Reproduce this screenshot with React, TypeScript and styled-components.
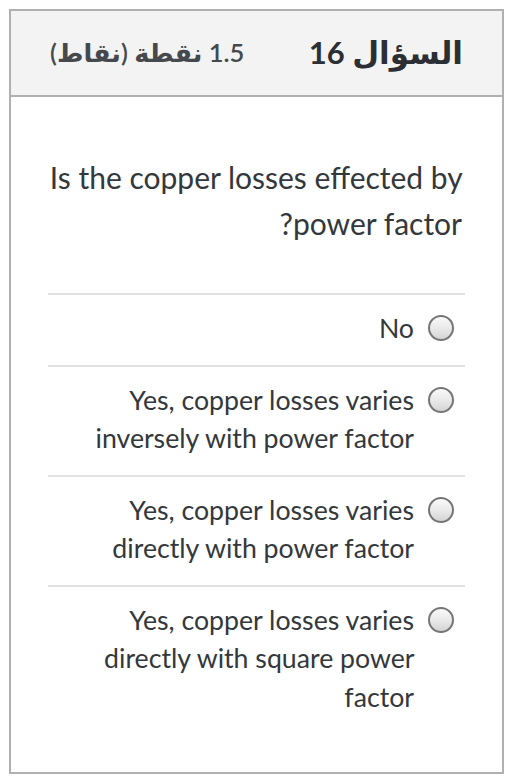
import styled, { createGlobalStyle } from "styled-components";

const GlobalStyle = createGlobalStyle`
  html, body {
    margin: 0;
    padding: 0;
    background: #ffffff;
  }
  body {
    font-family: Lato, "DejaVu Sans", sans-serif;
    color: #333a3f;
  }
`;

const Page = styled.div`
  padding: 9px;
  width: 531px;
  box-sizing: border-box;
`;

const Card = styled.section`
  direction: rtl;
  width: 495px;
  height: 765px;
  box-sizing: border-box;
  border: 2px solid #b0b0b0;
  background: #ffffff;
  display: flex;
  flex-direction: column;
`;

const Header = styled.header`
  height: 86px;
  flex-shrink: 0;
  box-sizing: border-box;
  background: #f3f3f3;
  border-bottom: 2px solid #b0b0b0;
  display: flex;
  align-items: center;
  justify-content: space-between;
  padding: 0 39px 2px 39px;
`;

const Title = styled.h2`
  margin: 0;
  font-size: 31px;
  font-weight: 700;
  color: #2b2f33;
`;

const Points = styled.span`
  font-size: 25.5px;
  font-weight: 600;
  color: #45494d;
`;

const Body = styled.div`
  padding: 57px 37px 0 37px;
`;

const Question = styled.p`
  margin: 0 0 47px 0;
  padding-right: 3px;
  font-size: 30px;
  line-height: 46px;
  color: #33383c;
`;

const Answers = styled.ul`
  list-style: none;
  margin: 0;
  padding: 0;
`;

const Answer = styled.li`
  border-top: 2px solid #e1e1e1;
  padding: 14px 11px 17px 0;
  display: flex;
  align-items: flex-start;
  gap: 14px;
`;

const Radio = styled.span`
  width: 26px;
  height: 26px;
  flex-shrink: 0;
  box-sizing: border-box;
  margin-top: 6px;
  border-radius: 50%;
  border: 2px solid #767676;
  background: linear-gradient(180deg, #fafafa 0%, #e6e6e6 60%, #d4d4d4 100%);
`;

const Label = styled.span`
  font-size: 26.7px;
  line-height: 38.5px;
  color: #33383c;
  max-width: 340px;
`;

const answers = [
  "No",
  "Yes, copper losses varies inversely with power factor",
  "Yes, copper losses varies directly with power factor",
  "Yes, copper losses varies directly with square power factor",
];

export default function App() {
  return (
    <Page>
      <GlobalStyle />
      <Card>
        <Header>
          <Title>السؤال 16</Title>
          <Points>1.5 نقطة (نقاط)</Points>
        </Header>
        <Body>
          <Question>Is the copper losses effected by power factor?</Question>
          <Answers>
            {answers.map((a) => (
              <Answer key={a}>
                <Radio />
                <Label>{a}</Label>
              </Answer>
            ))}
          </Answers>
        </Body>
      </Card>
    </Page>
  );
}
